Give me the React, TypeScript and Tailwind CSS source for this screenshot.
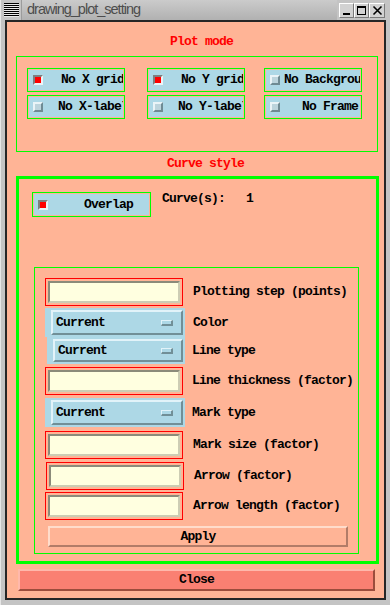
import type { ReactNode } from "react";

const mono = "font-['Liberation_Mono',monospace] font-bold text-[13px] tracking-[-0.8px] leading-[14px] text-black whitespace-nowrap";

// Tk style check indicator, red when on
function Indicator({ on }: { on: boolean }) {
    if (on) {
        return (
            <div className="w-[10px] h-[10px] shrink-0 border-2 border-t-[#7f7f7f] border-l-[#7f7f7f] border-b-[#eaf4f7] border-r-[#eaf4f7] bg-[#ff0000]" />
        );
    }
    return (
        <div className="w-[10px] h-[10px] shrink-0 border-2 border-t-[#eaf4f7] border-l-[#eaf4f7] border-b-[#6f8b93] border-r-[#6f8b93] bg-[#bcd4dc]" />
    );
}

function Check({ on, label, textClass, sizeClass }: { on: boolean; label: string; textClass: string; sizeClass: string }) {
    return (
        <div className={"border border-[#00ff00] p-px " + sizeClass}>
            <div className="h-full bg-[#add8e6] flex items-center pl-[4px] overflow-hidden">
                <Indicator on={on} />
                <span className={mono + " " + textClass}>{label}</span>
            </div>
        </div>
    );
}

function Entry({ className }: { className: string }) {
    return (
        <div className={"border border-[#ff0000] p-[2px] h-[28px] shrink-0 " + className}>
            <div className="h-full border-2 border-t-[#8b8b7a] border-l-[#8b8b7a] border-b-[#cdcdb4] border-r-[#cdcdb4] bg-[#ffffe0]" />
        </div>
    );
}

function MenuButton({ className }: { className: string }) {
    return (
        <div className={"bg-[#add8e6] pl-[6px] pr-[2px] py-[2px] shrink-0 " + className}>
            <div className="h-full border-2 border-t-[#e2f3f9] border-l-[#e2f3f9] border-b-[#718f97] border-r-[#718f97] flex items-center justify-between pl-[3px] pr-[8px]">
                <span className={mono}>Current</span>
                <span className="w-[12px] h-[6px] border-t border-l border-b-2 border-r-2 border-t-[#e2f3f9] border-l-[#e2f3f9] border-b-[#718f97] border-r-[#718f97] bg-[#add8e6]" />
            </div>
        </div>
    );
}

function Row({ className, children }: { className: string; children: ReactNode }) {
    return <div className={"flex items-center " + className}>{children}</div>;
}

function TitleButton({ children, className }: { children: ReactNode; className: string }) {
    return (
        <div className={"h-[15px] border border-t-white border-l-white border-b-[#7a7a7a] border-r-[#7a7a7a] bg-[#d2d2d2] flex items-center justify-center " + className}>
            {children}
        </div>
    );
}

export default function App() {
    return (
        <div className="w-[390px] h-[605px] bg-[#c4c4c4] border-l border-[#e6e6e6] overflow-hidden">

            {/* window title bar */}
            <div className="h-[20px] flex items-stretch">
                <div className="w-[20px] flex items-center justify-center">
                    <svg width="15" height="14" viewBox="0 0 15 14">
                        <rect x="0" y="0" width="15" height="14" fill="#e8e8e8" />
                        {[0.5, 2.5, 4.5, 6.5, 8.5, 10.5, 12.5].map((y) => (
                            <line key={y} x1="0" x2="15" y1={y} y2={y} stroke="#000" strokeWidth="1" />
                        ))}
                    </svg>
                </div>
                <div className="flex-1 flex items-center pl-[5px] bg-gradient-to-b from-[#cbcbcb] to-[#b1b1b1] border-l border-[#9c9c9c] text-[#4d4d4d] text-[14.5px] tracking-[-1px] font-['Liberation_Sans',sans-serif]">
                    drawing_plot_setting
                </div>
                <div className="flex items-center pl-[2px] pr-[5px]">
                    <TitleButton className="w-[15px]">
                        <svg width="11" height="11" viewBox="0 0 11 11">
                            <rect x="2" y="8" width="7" height="2" fill="#000" />
                        </svg>
                    </TitleButton>
                    <TitleButton className="w-[15px]">
                        <svg width="11" height="11" viewBox="0 0 11 11">
                            <rect x="1.5" y="1.5" width="8" height="8" fill="none" stroke="#000" />
                            <rect x="1" y="1" width="9" height="2" fill="#000" />
                        </svg>
                    </TitleButton>
                    <TitleButton className="w-[16px]">
                        <svg width="11" height="11" viewBox="0 0 11 11">
                            <path d="M1.5 1.5 L9.5 9.5 M9.5 1.5 L1.5 9.5" stroke="#000" strokeWidth="1.6" />
                        </svg>
                    </TitleButton>
                </div>
            </div>

            {/* window body */}
            <div className="mx-[4px] border-2 border-[#262626]">
                <div className="h-[576px] bg-[#ffb496] flex flex-col">

                    <div className={mono + " mt-[13px] h-[14px] text-center pl-[12px]"}>
                        <span className="text-[#ff0000]">Plot mode</span>
                    </div>

                    {/* plot mode options */}
                    <div className="ml-[9px] w-[362px] h-[96px] border border-[#00ff00] mt-[7px] pt-[11px] pl-[10px] flex">
                        <div className="flex flex-col gap-[3px]">
                            <Check on label="No X grid" textClass="ml-[18px]" sizeClass="w-[98px] h-[24px]" />
                            <Check on={false} label="No X-label" textClass="ml-[15px]" sizeClass="w-[98px] h-[24px]" />
                        </div>
                        <div className="flex flex-col gap-[3px] ml-[22px]">
                            <Check on label="No Y grid" textClass="ml-[18px]" sizeClass="w-[98px] h-[24px]" />
                            <Check on={false} label="No Y-label" textClass="ml-[15px]" sizeClass="w-[98px] h-[24px]" />
                        </div>
                        <div className="flex flex-col gap-[3px] ml-[19px]">
                            <Check on={false} label="No Background" textClass="ml-[4px]" sizeClass="w-[98px] h-[24px]" />
                            <Check on={false} label="No Frame" textClass="ml-[22px]" sizeClass="w-[98px] h-[24px]" />
                        </div>
                    </div>

                    <div className={mono + " mt-[5px] h-[14px] text-center pl-[20px]"}>
                        <span className="text-[#ff0000]">Curve style</span>
                    </div>

                    {/* curve style */}
                    <div className="ml-[9px] w-[363px] h-[388px] border-[3px] border-[#00ff00] mt-[5px] flex flex-col">
                        <div className="flex items-start pt-[13px] pl-[13px]">
                            <Check on label="Overlap" textClass="ml-[36px]" sizeClass="w-[119px] h-[25px]" />
                            <span className={mono + " ml-[11px] whitespace-pre"}>Curve(s):   1</span>
                        </div>

                        <div className="mt-[50px] ml-[15px] w-[325px] h-[287px] border border-[#00ff00] flex flex-col">
                            <Row className="mt-[10px] h-[28px]">
                                <Entry className="ml-[10px] w-[138px]" />
                                <span className={mono + " ml-[10px]"}>Plotting step (points)</span>
                            </Row>
                            <Row className="mt-[2px] h-[29px]">
                                <MenuButton className="ml-[10px] w-[140px] h-[29px]" />
                                <span className={mono + " ml-[8px]"}>Color</span>
                            </Row>
                            <Row className="h-[27px]">
                                <MenuButton className="ml-[12px] w-[138px] h-[27px]" />
                                <span className={mono + " ml-[7px]"}>Line type</span>
                            </Row>
                            <Row className="mt-[3px] h-[28px]">
                                <Entry className="ml-[10px] w-[138px]" />
                                <span className={mono + " ml-[9px]"}>Line thickness (factor)</span>
                            </Row>
                            <Row className="mt-[3px] h-[29px]">
                                <MenuButton className="ml-[10px] w-[140px] h-[29px]" />
                                <span className={mono + " ml-[7px]"}>Mark type</span>
                            </Row>
                            <Row className="mt-[4px] h-[28px]">
                                <Entry className="ml-[10px] w-[138px]" />
                                <span className={mono + " ml-[10px]"}>Mark size (factor)</span>
                            </Row>
                            <Row className="mt-[3px] h-[28px]">
                                <Entry className="ml-[11px] w-[138px]" />
                                <span className={mono + " ml-[10px]"}>Arrow (factor)</span>
                            </Row>
                            <Row className="mt-[2px] h-[28px]">
                                <Entry className="ml-[10px] w-[138px]" />
                                <span className={mono + " ml-[10px]"}>Arrow length (factor)</span>
                            </Row>
                            <div className={mono + " mt-[6px] ml-[13px] w-[300px] h-[21px] border-2 border-t-[#ffdccb] border-l-[#ffdccb] border-b-[#b27c68] border-r-[#b27c68] flex items-center justify-center"}>
                                Apply
                            </div>
                        </div>
                    </div>

                    <div className={mono + " mt-[5px] ml-[11px] w-[357px] h-[22px] bg-[#fa8072] border-2 border-t-[#ffb8ab] border-l-[#ffb8ab] border-b-[#9c4d3c] border-r-[#9c4d3c] flex items-center justify-center"}>
                        Close
                    </div>
                </div>
            </div>
        </div>
    );
}
